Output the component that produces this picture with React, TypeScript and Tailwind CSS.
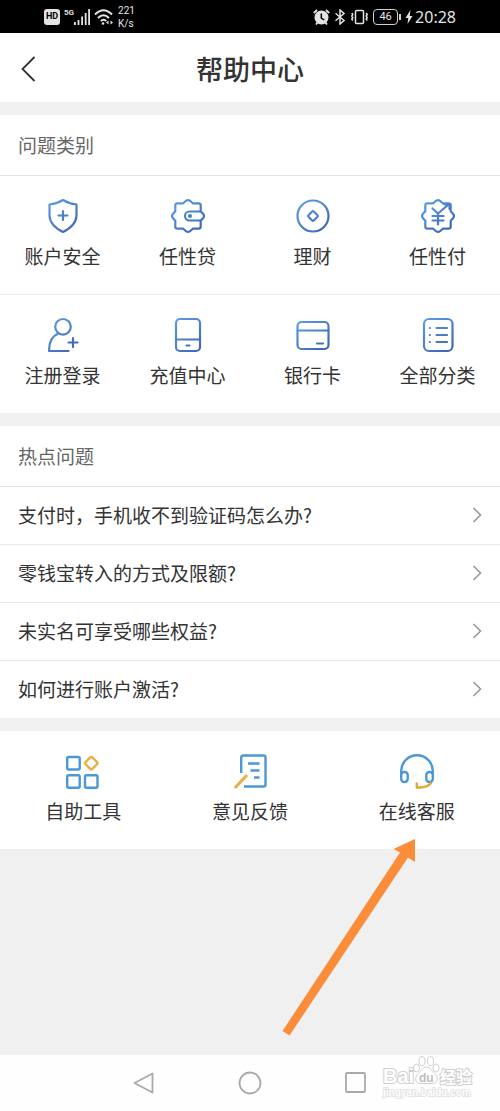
import { useId, type ReactNode } from "react";

interface Entry {
  label: string;
  icon: ReactNode;
}

// eight-lobed seal, drawn around 18,18
const BADGE =
  "M16 2.800Q18 1.300 20 2.800L22.800 5.300L28.500 5.300Q30.700 5.300 30.700 7.500L30.700 13.200L33.200 16Q34.700 18 33.200 20L30.700 22.800L30.700 28.500Q30.700 30.700 28.500 30.700L22.800 30.700L20 33.200Q18 34.700 16 33.200L13.200 30.700L7.500 30.700Q5.300 30.700 5.300 28.500L5.300 22.800L2.800 20Q1.300 18 2.800 16L5.300 13.200L5.300 7.500Q5.300 5.300 7.500 5.300L13.200 5.300Z";

function BlueIcon({ children }: { children: ReactNode }) {
  const id = useId();

  return (
    <svg
      className="size-9"
      viewBox="0 0 36 36"
      fill="none"
      stroke={`url(#${id})`}
      strokeWidth="2.2"
      strokeLinecap="round"
      strokeLinejoin="round"
      aria-hidden="true"
    >
      <defs>
        <linearGradient id={id} gradientUnits="userSpaceOnUse" x1="4" y1="2" x2="32" y2="34">
          <stop offset="0" stopColor="#5c9fe2" />
          <stop offset="1" stopColor="#3c62b4" />
        </linearGradient>
      </defs>
      {children}
    </svg>
  );
}

function ToolIcon({ children }: { children: ReactNode }) {
  return (
    <svg
      className="size-9"
      viewBox="0 0 36 36"
      fill="none"
      stroke="#4a98d8"
      strokeWidth="2.4"
      strokeLinejoin="round"
      aria-hidden="true"
    >
      {children}
    </svg>
  );
}

const categories: Entry[] = [
  {
    label: "账户安全",
    icon: (
      <BlueIcon>
        <path d="M18 2C14 4.5 9 6 4.5 6.5V17C4.5 24.5 10 30 18 34C26 30 31.5 24.5 31.5 17V6.5C27 6 22 4.5 18 2Z" />
        <path d="M18 13v9M13.5 17.5h9" />
      </BlueIcon>
    ),
  },
  {
    label: "任性贷",
    icon: (
      <BlueIcon>
        <path d={BADGE} />
        <path d="M30.5 13.5H19.500A4.500 4.500 0 0 0 19.500 22.500H30.5" />
        <circle cx="20" cy="18" r="1" />
      </BlueIcon>
    ),
  },
  {
    label: "理财",
    icon: (
      <BlueIcon>
        <circle cx="18" cy="18" r="15.5" />
        <rect x="14.2" y="14.2" width="7.6" height="7.6" rx="1.5" transform="rotate(45 18 18)" />
      </BlueIcon>
    ),
  },
  {
    label: "任性付",
    icon: (
      <BlueIcon>
        <path d={BADGE} />
        <path d="M12.500 10.500L18 15.500L28.500 6.500M24.500 6.500H29.500V11M12.500 18H23.500M12.500 22.500H23.500M18 15.500V26.500" />
      </BlueIcon>
    ),
  },
  {
    label: "注册登录",
    icon: (
      <BlueIcon>
        <circle cx="18" cy="9.8" r="7.8" />
        <path d="M23.5 34H4C4 26 6 19.5 12.5 17M28 21v9M23.5 25.5h9" />
      </BlueIcon>
    ),
  },
  {
    label: "充值中心",
    icon: (
      <BlueIcon>
        <rect x="6" y="2" width="24" height="32" rx="4" />
        <path d="M6 22.5h24M16.5 28.5h3" />
      </BlueIcon>
    ),
  },
  {
    label: "银行卡",
    icon: (
      <BlueIcon>
        <rect x="2.5" y="5" width="31" height="27" rx="4" />
        <path d="M2.5 13.5h31M22 26.5h6" />
      </BlueIcon>
    ),
  },
  {
    label: "全部分类",
    icon: (
      <BlueIcon>
        <rect x="4" y="2" width="28.5" height="32" rx="5" />
        <path d="M9.8 11h.2M9.8 18h.2M9.8 25h.2M16.5 11h10.5M16.5 18h10.5M16.5 25h10.5" />
      </BlueIcon>
    ),
  },
];

const questions = [
  "支付时，手机收不到验证码怎么办?",
  "零钱宝转入的方式及限额?",
  "未实名可享受哪些权益?",
  "如何进行账户激活?",
];

const tools: Entry[] = [
  {
    label: "自助工具",
    icon: (
      <ToolIcon>
        <rect x="2.2" y="4" width="12.5" height="12.5" rx="1.5" />
        <rect x="2.2" y="22.3" width="12.5" height="12.5" rx="1.5" />
        <rect x="20" y="22.3" width="12.5" height="12.5" rx="1.5" />
        <rect
          x="21.5"
          y="5.4"
          width="9.6"
          height="9.6"
          rx="1.5"
          transform="rotate(45 26.3 10.2)"
          stroke="#e9ae45"
        />
      </ToolIcon>
    ),
  },
  {
    label: "意见反馈",
    icon: (
      <ToolIcon>
        <path d="M9.2 20V4.5Q9.2 2.5 11.2 2.5H31.5Q33.5 2.5 33.5 4.5V31.5Q33.5 33.5 31.5 33.5H12" />
        <path d="M16 10.5h11.5M18.5 17.5h9M22 24.5h5.5" />
        <path d="M2.8 35L15 22" stroke="#e9ae45" strokeWidth="3" />
      </ToolIcon>
    ),
  },
  {
    label: "在线客服",
    icon: (
      <ToolIcon>
        <path d="M2.2 21V18A15.8 15.8 0 0 1 33.8 18V21" />
        <rect x="2.2" y="19" width="6.5" height="10" rx="3" />
        <rect x="27.3" y="19" width="6.5" height="10" rx="3" />
        <path d="M17.8 29.5V34.5H21Q28.5 34.5 32.5 29.5" stroke="#dfa92f" />
      </ToolIcon>
    ),
  },
];

function StatusBar() {
  return (
    <div className="flex h-[33px] items-center justify-between bg-black pl-11 pr-11 text-[#e4e4e4]">
      <div className="flex items-center">
        <span className="flex h-4 w-4 items-center justify-center rounded-[3px] bg-[#e4e4e4] font-['Roboto',sans-serif] text-[9px] font-bold leading-none text-black">
          HD
        </span>
        <span className="ml-1 self-start pt-1 font-['Roboto',sans-serif] text-[8px] font-bold leading-[10px]">
          5G
        </span>
        <svg className="h-4 w-4" viewBox="0 0 16 16" fill="currentColor" aria-hidden="true">
          <path d="M0 13h1.8v3H0zM3.6 11h1.8v5H3.6zM7.2 7.500h1.800V16H7.200zM10.800 4h1.800v12h-1.800zM14.200 0H16v16h-1.800z" />
        </svg>
        <svg
          className="ml-1 h-4 w-5"
          viewBox="0 0 20 16"
          fill="none"
          stroke="currentColor"
          strokeWidth="2"
          aria-hidden="true"
        >
          <path d="M1 5.500Q9.500 -3 18 5.500M4 9Q9.500 3.500 15 9M6.800 12Q9.500 9.500 12.200 12" />
          <circle cx="9" cy="14.500" r="1.300" fill="currentColor" stroke="none" />
          <path d="M12 13.500l2.500-2v4zM19 13.500l-2.500-2v4z" fill="currentColor" stroke="none" />
        </svg>
        <div className="ml-1 flex flex-col font-['Roboto',sans-serif] text-[10px] leading-[13px]">
          <span>221</span>
          <span>K/s</span>
        </div>
      </div>

      <div className="flex items-center">
        <svg className="h-4 w-[17px]" viewBox="0 0 17 16" aria-hidden="true">
          <circle cx="8.500" cy="8.500" r="7" fill="currentColor" />
          <path d="M.8 4L4 1M16.200 4L13 1M3 15.500l1.500-2M14 15.500l-1.500-2" stroke="currentColor" strokeWidth="1.800" />
          <path d="M8.300 4.500V9l3 2" fill="none" stroke="#000" strokeWidth="1.500" />
        </svg>
        <svg
          className="ml-1 h-4 w-3"
          viewBox="0 0 12 16"
          fill="none"
          stroke="currentColor"
          strokeWidth="1.500"
          aria-hidden="true"
        >
          <path d="M1.500 4.200l8.500 7.300L6 15V1l4 3.500L1.500 11.800" />
        </svg>
        <svg
          className="ml-1 h-4 w-[19px]"
          viewBox="0 0 19 16"
          fill="none"
          stroke="currentColor"
          strokeWidth="1.500"
          aria-hidden="true"
        >
          <rect x="5.500" y="1.500" width="8" height="13" rx="1" />
          <path d="M1.800 4l1 1.500-1 1.500 1 1.500-1 1.500 1 1.500M16.200 4l1 1.500-1 1.500 1 1.500-1 1.500 1 1.500" />
        </svg>
        <span className="ml-1 flex h-4 w-[25px] items-center justify-center rounded-[4px] border border-[#d0d0d0] font-['Roboto',sans-serif] text-[11px] leading-none">
          46
        </span>
        <span className="ml-px h-1.5 w-0.5 bg-[#d0d0d0]" />
        <svg className="ml-1 h-4 w-2" viewBox="0 0 8 16" fill="currentColor" aria-hidden="true">
          <path d="M5.500 1L.5 9h2.800L2.500 15 7.500 7H4.700z" />
        </svg>
        <span className="ml-0.5 font-['Noto_Sans',sans-serif] text-[16px] leading-5">20:28</span>
      </div>
    </div>
  );
}

function SectionTitle({ children }: { children: ReactNode }) {
  return (
    <h2 className="border-b border-[#e4e4e4] px-[18px] py-[18px] leading-6 text-[#666]">
      {children}
    </h2>
  );
}

function EntryButton({ label, icon }: Entry) {
  return (
    <button
      type="button"
      className="flex cursor-pointer flex-col items-center gap-2.5 pb-[26px] pt-[22px] leading-6"
    >
      {icon}
      <span>{label}</span>
    </button>
  );
}

function Watermark() {
  return (
    <svg
      className="absolute right-6 top-0 h-12 w-24"
      viewBox="0 0 96 48"
      fill="#fff"
      stroke="#cfcfcf"
      strokeWidth="1"
      aria-hidden="true"
    >
      <g className="font-['Liberation_Sans','Noto_Sans_CJK_SC',sans-serif] font-bold" paintOrder="stroke">
        <text x="3" y="28" fontSize="20" strokeWidth="2">
          Bai
        </text>
        <text x="60" y="28" fontSize="16" strokeWidth="2">
          经验
        </text>
        <text x="3" y="41" fontSize="10" strokeWidth="1.500" stroke="#dedede">
          jingyan.baidu.com
        </text>
      </g>
      <ellipse cx="36.500" cy="13" rx="3" ry="4" />
      <ellipse cx="42" cy="6" rx="3" ry="4.500" />
      <ellipse cx="50.500" cy="6" rx="3" ry="4.500" />
      <ellipse cx="56" cy="13" rx="3" ry="4" />
      <path d="M46.500 12c-4 0-5 4-8 6.500-4 3.500-4 10 2 10h12c6 0 6-6.500 2-10-3-2.500-4-6.500-8-6.500z" />
      <text
        x="39"
        y="27"
        fontSize="12"
        fill="#bdbdbd"
        stroke="none"
        className="font-['Liberation_Sans',sans-serif] font-bold"
      >
        du
      </text>
    </svg>
  );
}

export default function App() {
  return (
    <div className="flex min-h-screen flex-col bg-[#f0f0f0] font-['Noto_Sans_CJK_SC',sans-serif] text-[19px] text-[#333]">
      <StatusBar />

      <header className="grid grid-cols-[40px_1fr_40px] items-center bg-white px-2 pb-3.5 pt-[17px]">
        <button type="button" aria-label="返回" className="flex cursor-pointer justify-center">
          <svg
            className="h-7 w-4"
            viewBox="0 0 16 28"
            fill="none"
            stroke="#333"
            strokeWidth="1.8"
            aria-hidden="true"
          >
            <path d="M14.500 2L2.500 14l12 12" />
          </svg>
        </button>
        <h1 className="text-center text-[27px] font-medium leading-[38px]">帮助中心</h1>
      </header>

      <main className="mt-[13px] flex flex-col gap-[13px]">
        <section className="bg-white">
          <SectionTitle>问题类别</SectionTitle>
          <div className="grid grid-cols-4">
            {categories.slice(0, 4).map((c) => (
              <EntryButton key={c.label} {...c} />
            ))}
          </div>
          <div className="grid grid-cols-4 border-t border-[#ececec]">
            {categories.slice(4).map((c) => (
              <EntryButton key={c.label} {...c} />
            ))}
          </div>
        </section>

        <section className="bg-white">
          <SectionTitle>热点问题</SectionTitle>
          <ul>
            {questions.map((q) => (
              <li key={q} className="border-b border-[#e8e8e8] last:border-b-0">
                <a href="#" className="flex items-center justify-between px-[18px] pb-[17px] pt-4 leading-6">
                  {q}
                  <svg
                    className="h-4 w-2.5"
                    viewBox="0 0 10 16"
                    fill="none"
                    stroke="#999"
                    strokeWidth="1.6"
                    aria-hidden="true"
                  >
                    <path d="M1.500 1l7 7-7 7" />
                  </svg>
                </a>
              </li>
            ))}
          </ul>
        </section>

        <section className="relative grid grid-cols-3 bg-white">
          {tools.map((t) => (
            <EntryButton key={t.label} {...t} />
          ))}
          {/* pointer to the customer service entry */}
          <svg
            className="absolute right-20 top-[106px] h-[200px] w-[140px]"
            viewBox="0 0 140 200"
            fill="#fb8c3a"
            aria-hidden="true"
          >
            <path d="M135 2L135 25 128 20.500 9.500 198.500 2.500 194 120 15.500 113.500 12Z" />
          </svg>
        </section>
      </main>

      <nav className="relative mt-auto flex h-14 items-center justify-center gap-[82px] bg-[#fefefe]">
        <button type="button" aria-label="后退" className="cursor-pointer">
          <svg className="size-6" viewBox="0 0 24 24" fill="none" stroke="#aaa" strokeWidth="1.8">
            <path d="M20.500 2.500v19L2.500 12z" strokeLinejoin="round" />
          </svg>
        </button>
        <button type="button" aria-label="主页" className="cursor-pointer">
          <svg className="size-6" viewBox="0 0 24 24" fill="none" stroke="#aaa" strokeWidth="1.8">
            <circle cx="12" cy="12" r="10.500" />
          </svg>
        </button>
        <button type="button" aria-label="最近任务" className="cursor-pointer">
          <svg className="size-6" viewBox="0 0 24 24" fill="none" stroke="#aaa" strokeWidth="1.8">
            <rect x="2" y="2" width="19" height="19" rx="1" />
          </svg>
        </button>
        <Watermark />
      </nav>
    </div>
  );
}
